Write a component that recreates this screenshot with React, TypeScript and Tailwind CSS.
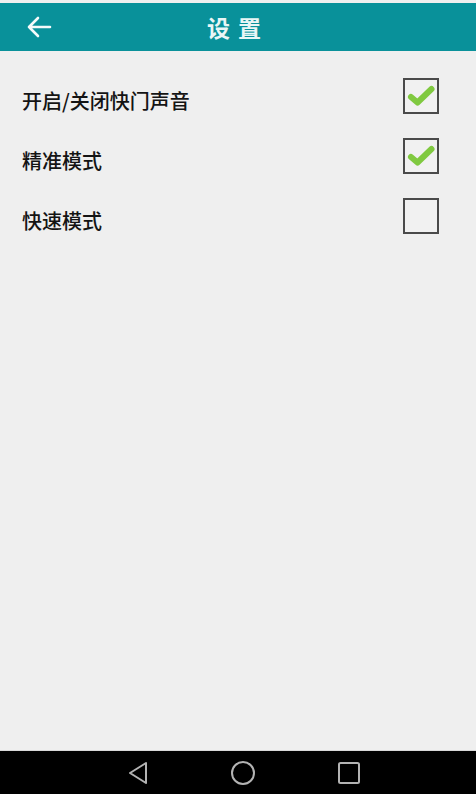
import React, { useState } from "react";

const items = [
  { label: "开启/关闭快门声音", checked: true },
  { label: "精准模式", checked: true },
  { label: "快速模式", checked: false },
];

function CheckBox({ checked, onClick }: { checked: boolean; onClick: () => void }) {
  return (
    <button
      onClick={onClick}
      className="flex h-[36px] w-[36px] items-center justify-center border-2 border-[#4a4a4a] bg-[#f1f1f1]"
    >
      {checked && (
        <svg width="30" height="26" viewBox="0 0 30 26">
          <path
            d="M5 14 L11.5 19.5 L25.5 6"
            fill="none"
            stroke="#80c940"
            strokeWidth="6"
            strokeLinecap="round"
            strokeLinejoin="round"
          />
        </svg>
      )}
    </button>
  );
}

export default function App() {
  const [state, setState] = useState(items.map((i) => i.checked));

  return (
    <div
      className="flex h-[794px] w-[476px] flex-col bg-[#efefef]"
      style={{ fontFamily: '"Noto Sans CJK SC", "Noto Sans", sans-serif' }}
    >
      {/* Header */}
      <div className="mt-[3px] flex h-[48px] items-center bg-[#09919a] px-[26px]">
        <svg width="26" height="22" viewBox="0 0 26 22">
          <path
            d="M24 11 H3 M12 2 L3 11 L12 20"
            fill="none"
            stroke="#f4fafa"
            strokeWidth="2.6"
            strokeLinecap="round"
            strokeLinejoin="round"
          />
        </svg>
        <div className="flex-1 pr-[26px] text-center text-[23px] font-semibold tracking-[8px] text-[#eaf6f6]">
          设置
        </div>
      </div>

      {/* Settings list */}
      <div className="flex flex-col pt-[15px]">
        {items.map((item, i) => (
          <div key={item.label} className="flex h-[60px] items-center justify-between pl-[22px] pr-[37px]">
            <span className="pt-[9px] text-[20px] font-medium leading-none text-[#141414]">{item.label}</span>
            <CheckBox
              checked={state[i]}
              onClick={() => setState((s) => s.map((v, j) => (j === i ? !v : v)))}
            />
          </div>
        ))}
      </div>

      <div className="flex-1" />

      {/* Navigation bar */}
      <div className="flex h-[44px] items-center border-t border-[#d8d8d8] bg-black">
        <div className="flex w-full items-center justify-center gap-[81px] pl-[12px]">
          <svg width="22" height="24" viewBox="0 0 22 24">
            <path d="M19 2 L3 12 L19 22 Z" fill="none" stroke="#b3b3b3" strokeWidth="2" strokeLinejoin="round" />
          </svg>
          <svg width="26" height="26" viewBox="0 0 26 26">
            <circle cx="13" cy="13" r="11" fill="none" stroke="#b3b3b3" strokeWidth="2" />
          </svg>
          <svg width="24" height="24" viewBox="0 0 24 24">
            <rect x="2" y="2" width="20" height="20" rx="1.5" fill="none" stroke="#b3b3b3" strokeWidth="2" />
          </svg>
        </div>
      </div>
    </div>
  );
}
